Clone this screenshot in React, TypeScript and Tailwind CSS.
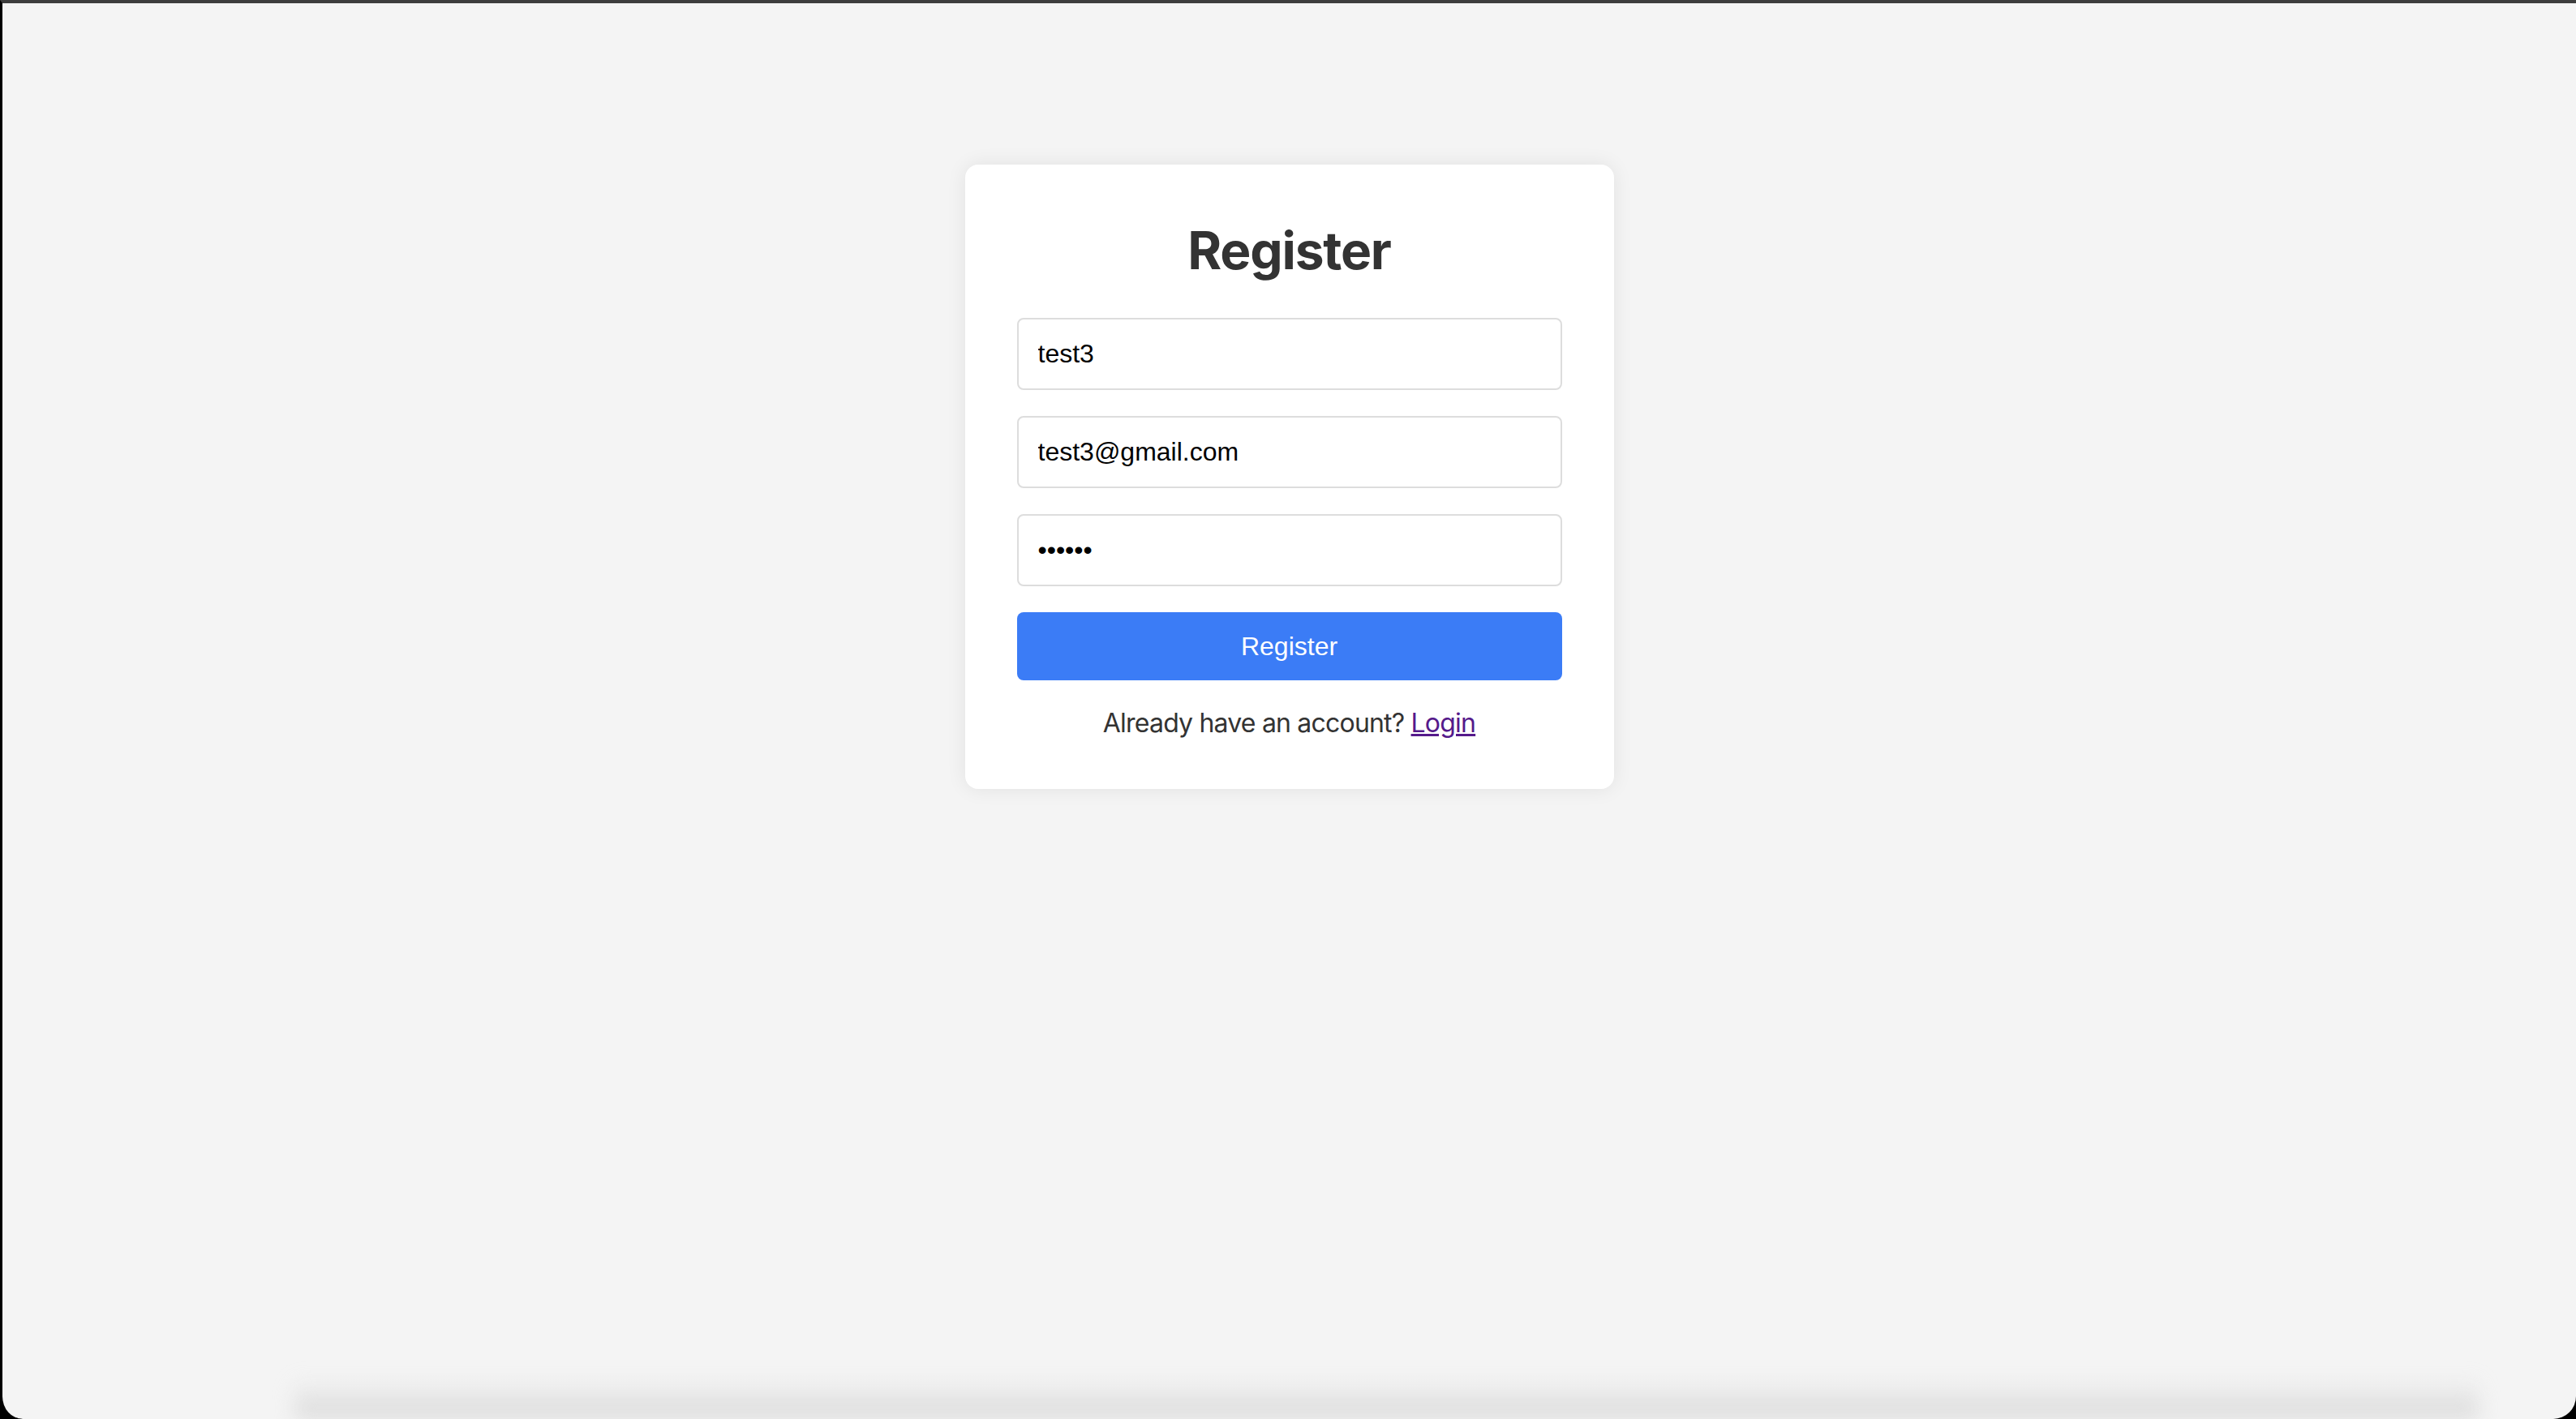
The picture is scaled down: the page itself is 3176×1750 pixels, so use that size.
import React, { useState } from "react";

const App = () => {
  const [username, setUsername] = useState("test3");
  const [email, setEmail] = useState("test3@gmail.com");
  const [password, setPassword] = useState("123456");

  return (
    <div className="w-[3176px] h-[1750px] bg-black overflow-hidden">
      <div className="flex flex-col h-full bg-[#f4f4f4] border-t-[4px] border-t-[#3d3d3d] border-l-[3px] border-l-black rounded-b-[28px] overflow-hidden">
        <main className="flex-1 pt-[199px]">
          <div className="mx-auto w-[800px] bg-white rounded-[16px] shadow-[0_0_24px_rgba(0,0,0,0.08)] px-[64px] pt-[67px] pb-[62px]">
            <h2 className="text-center text-[64px] leading-[77px] font-bold text-[#333] mb-[45px] font-['Inter',sans-serif] tracking-[-1.2px]">
              Register
            </h2>

            <form className="flex flex-col gap-[32px]" onSubmit={(e) => e.preventDefault()}>
              <input
                type="text"
                value={username}
                onChange={(e) => setUsername(e.target.value)}
                className="h-[89px] w-full border-2 border-[#dddddd] rounded-[8px] px-[24px] text-[32px] text-black font-['Liberation_Sans',Arial,sans-serif] outline-none"
              />
              <input
                type="email"
                value={email}
                onChange={(e) => setEmail(e.target.value)}
                className="h-[89px] w-full border-2 border-[#dddddd] rounded-[8px] px-[24px] text-[32px] text-black font-['Liberation_Sans',Arial,sans-serif] outline-none"
              />
              <input
                type="password"
                value={password}
                onChange={(e) => setPassword(e.target.value)}
                className="h-[89px] w-full border-2 border-[#dddddd] rounded-[8px] px-[24px] text-[32px] text-black font-['Liberation_Sans',Arial,sans-serif] outline-none"
              />
              <button
                type="submit"
                className="h-[84px] w-full bg-[#3b7cf6] rounded-[8px] text-white text-[32px] font-['Liberation_Sans',Arial,sans-serif]"
              >
                Register
              </button>
            </form>

            <p className="mt-[34px] text-center text-[32px] leading-[38px] text-[#333] font-['Inter',sans-serif] tracking-[-0.8px]">
              Already have an account?{" "}
              <a href="#" className="text-[#551a8b] underline">
                Login
              </a>
            </p>
          </div>
        </main>

        {/* soft shadow along the bottom edge */}
        <div className="ml-[360px] mr-[120px] h-[50px] bg-gradient-to-b from-transparent to-[#d8d8d8] blur-[12px]" />
      </div>
    </div>
  );
};

export default App;
